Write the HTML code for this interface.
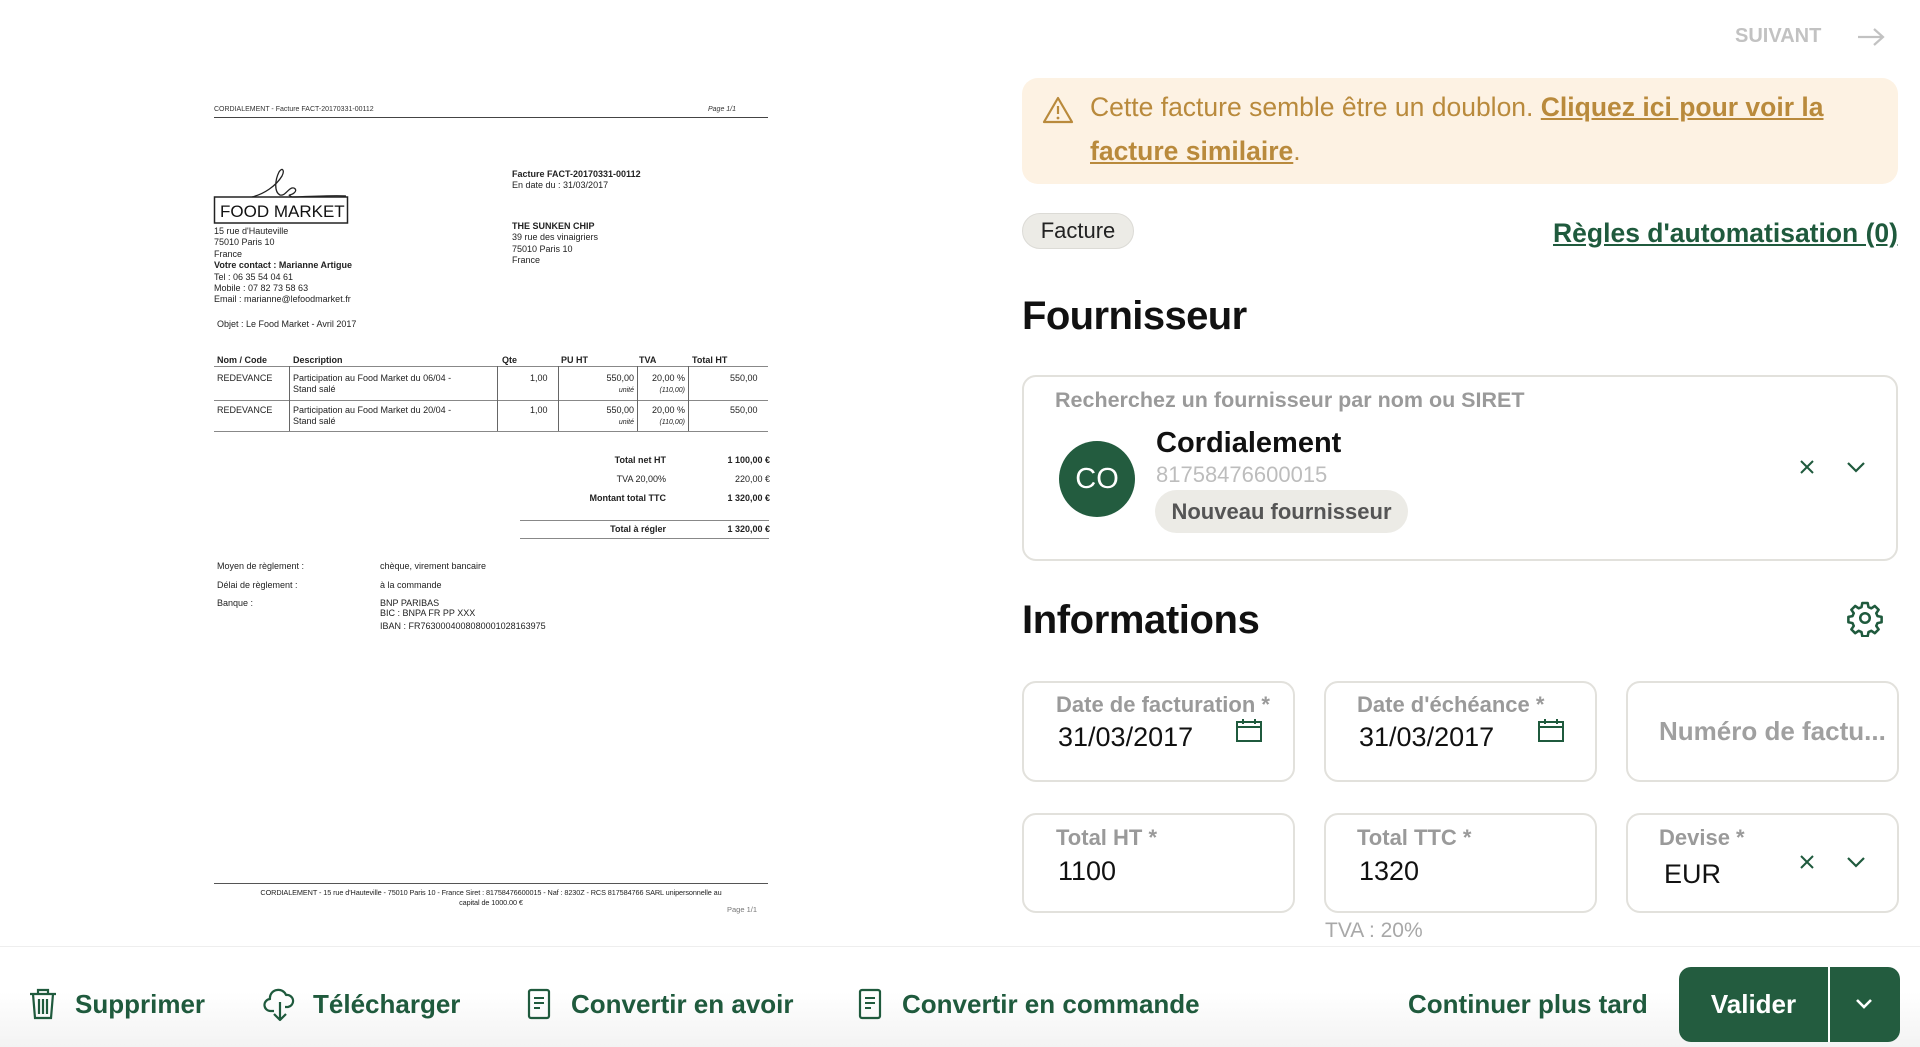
<!DOCTYPE html>
<html><head><meta charset="utf-8"><style>
*{margin:0;padding:0;box-sizing:border-box}
body{width:1920px;height:1047px;position:relative;background:#fff;font-family:"Liberation Sans",sans-serif;overflow:hidden}
.a{position:absolute;white-space:nowrap}
.d{font-size:9px;color:#222;line-height:11.4px}
.b{font-weight:bold}
.g{color:#1f5a3d}
.box{position:absolute;border:2px solid #e2e1dc;border-radius:14px;background:#fff}
.lab{position:absolute;font-size:22px;font-weight:bold;color:#9a9a9a;white-space:nowrap}
.val{position:absolute;font-size:27px;color:#111;white-space:nowrap}
.bt{position:absolute;top:989px;font-size:26px;font-weight:bold;color:#1f5a3d;white-space:nowrap;line-height:30px}
</style></head><body>

<div class="a" style="left:214px;top:106px;font-size:7px;color:#333">CORDIALEMENT - Facture FACT-20170331-00112</div>
<div class="a" style="left:708px;top:106px;font-size:7px;color:#333;font-style:italic">Page 1/1</div>
<div class="a" style="left:214px;top:117px;width:554px;height:1px;background:#444"></div>

<svg class="a" style="left:212px;top:164px" width="140" height="62" viewBox="0 0 140 62">
<path d="M40 33 C52 30 64 22 70 12 C73 6 70 3 67 8 C63 16 62 28 68 31 C72 32 74 28 78 25 C82 22 86 26 82 29 C79 32 74 30 80 33 C88 33 120 31 134 32" fill="none" stroke="#222" stroke-width="1.3"/>
<rect x="2.5" y="33" width="133" height="26" fill="none" stroke="#222" stroke-width="1.5"/>
<text x="8" y="53" font-family="Liberation Sans" font-size="17" fill="#111">FOOD MARKET</text>
</svg>

<div class="a d" style="left:214px;top:226px">15 rue d'Hauteville<br>75010 Paris 10<br>France<br><b>Votre contact : Marianne Artigue</b><br>Tel : 06 35 54 04 61<br>Mobile : 07 82 73 58 63<br>Email : marianne@lefoodmarket.fr</div>
<div class="a d" style="left:217px;top:319px">Objet : Le Food Market - Avril 2017</div>
<div class="a d" style="left:512px;top:169px"><b>Facture FACT-20170331-00112</b><br>En date du : 31/03/2017</div>
<div class="a d" style="left:512px;top:221px"><b>THE SUNKEN CHIP</b><br>39 rue des vinaigriers<br>75010 Paris 10<br>France</div>

<div class="a d b" style="left:217px;top:355px">Nom / Code</div>
<div class="a d b" style="left:293px;top:355px">Description</div>
<div class="a d b" style="left:502px;top:355px">Qte</div>
<div class="a d b" style="left:561px;top:355px">PU HT</div>
<div class="a d b" style="left:639px;top:355px">TVA</div>
<div class="a d b" style="left:692px;top:355px">Total HT</div>
<div class="a" style="left:214px;top:366px;width:554px;height:1px;background:#888"></div>
<div class="a" style="left:214px;top:400px;width:554px;height:1px;background:#888"></div>
<div class="a" style="left:214px;top:431px;width:554px;height:1px;background:#888"></div>
<div class="a" style="left:289px;top:366px;width:1px;height:65px;background:#666"></div>
<div class="a" style="left:497px;top:366px;width:1px;height:65px;background:#666"></div>
<div class="a" style="left:558px;top:366px;width:1px;height:65px;background:#666"></div>
<div class="a" style="left:637px;top:366px;width:1px;height:65px;background:#666"></div>
<div class="a" style="left:688px;top:366px;width:1px;height:65px;background:#666"></div>
<div class="a d" style="left:217px;top:373px">REDEVANCE</div>
<div class="a d" style="left:293px;top:373px">Participation au Food Market du 06/04 -<br>Stand salé</div>
<div class="a d" style="left:530px;top:373px">1,00</div>
<div class="a d" style="left:590px;top:373px;text-align:right;width:44px">550,00<br><i style="font-size:7px">unité</i></div>
<div class="a d" style="left:645px;top:373px;text-align:right;width:40px">20,00 %<br><i style="font-size:7px">(110,00)</i></div>
<div class="a d" style="left:730px;top:373px">550,00</div>
<div class="a d" style="left:217px;top:405px">REDEVANCE</div>
<div class="a d" style="left:293px;top:405px">Participation au Food Market du 20/04 -<br>Stand salé</div>
<div class="a d" style="left:530px;top:405px">1,00</div>
<div class="a d" style="left:590px;top:405px;text-align:right;width:44px">550,00<br><i style="font-size:7px">unité</i></div>
<div class="a d" style="left:645px;top:405px;text-align:right;width:40px">20,00 %<br><i style="font-size:7px">(110,00)</i></div>
<div class="a d" style="left:730px;top:405px">550,00</div>

<div class="a d" style="left:540px;top:451px;width:126px;text-align:right;line-height:19px"><b>Total net HT</b><br>TVA 20,00%<br><b>Montant total TTC</b></div>
<div class="a d" style="left:690px;top:451px;width:80px;text-align:right;line-height:19px"><b>1 100,00 €</b><br>220,00 €<br><b>1 320,00 €</b></div>
<div class="a" style="left:520px;top:520px;width:249px;height:1px;background:#888"></div>
<div class="a d b" style="left:540px;top:524px;width:126px;text-align:right">Total à régler</div>
<div class="a d b" style="left:690px;top:524px;width:80px;text-align:right">1 320,00 €</div>
<div class="a" style="left:520px;top:538px;width:249px;height:1px;background:#888"></div>

<div class="a d" style="left:217px;top:557px;line-height:18.5px">Moyen de règlement :<br>Délai de règlement :<br>Banque :</div>
<div class="a d" style="left:380px;top:557px;line-height:18.5px">chèque, virement bancaire<br>à la commande<br>BNP PARIBAS</div>
<div class="a d" style="left:380px;top:607px;line-height:12.5px">BIC : BNPA FR PP XXX<br>IBAN : FR7630004008080001028163975</div>

<div class="a" style="left:214px;top:883px;width:554px;height:1px;background:#555"></div>
<div class="a" style="left:218px;top:888px;width:546px;text-align:center;font-size:7.3px;line-height:10px;color:#222;white-space:normal;letter-spacing:-0.1px">CORDIALEMENT - 15 rue d'Hauteville - 75010 Paris 10 - France Siret : 81758476600015 - Naf : 8230Z - RCS 817584766 SARL unipersonnelle au<br>capital de 1000.00 €</div>
<div class="a" style="left:727px;top:905px;font-size:7.5px;color:#777">Page 1/1</div>

<div class="a" style="left:1735px;top:25px;font-size:20px;font-weight:bold;color:#c2c2c2">SUIVANT</div>
<svg class="a" style="left:1856px;top:26px" width="30" height="22" viewBox="0 0 30 22"><path d="M2 11H27M18 3l9 8-9 8" fill="none" stroke="#c2c2c2" stroke-width="2.2"/></svg>

<div class="a" style="left:1022px;top:78px;width:876px;height:106px;background:#fdf2e3;border-radius:16px"></div>
<svg class="a" style="left:1042px;top:96px" width="32" height="28" viewBox="0 0 32 28"><path d="M16 2L30 26H2Z" fill="none" stroke="#b98a3c" stroke-width="2.2" stroke-linejoin="round"/><path d="M16 10v8" stroke="#b98a3c" stroke-width="2.2"/><circle cx="16" cy="22" r="1.4" fill="#b98a3c"/></svg>
<div class="a" style="left:1090px;top:85px;font-size:26.5px;line-height:44px;color:#b98a3c;white-space:normal;width:790px">Cette facture semble être un doublon. <u style="font-weight:bold">Cliquez ici pour voir la facture similaire</u>.</div>

<div class="a" style="left:1022px;top:213px;width:112px;height:36px;background:#ecebe6;border:1.5px solid #dcdbd6;border-radius:18px;font-size:22px;line-height:33px;text-align:center;color:#222">Facture</div>
<div class="a g" style="right:22px;top:218px;font-size:26.5px;font-weight:bold;text-decoration:underline">Règles d'automatisation (0)</div>

<div class="a" style="left:1022px;top:294px;font-size:40px;font-weight:bold;color:#111;letter-spacing:-0.6px">Fournisseur</div>

<div class="box" style="left:1022px;top:375px;width:876px;height:186px"></div>
<div class="a" style="left:1055px;top:388px;font-size:21.5px;font-weight:bold;color:#9a9a9a">Recherchez un fournisseur par nom ou SIRET</div>
<div class="a" style="left:1059px;top:441px;width:76px;height:76px;border-radius:50%;background:#235c3f;color:#fff;font-size:29px;line-height:76px;text-align:center">CO</div>
<div class="a" style="left:1156px;top:427px;font-size:29px;font-weight:bold;color:#111">Cordialement</div>
<div class="a" style="left:1156px;top:462px;font-size:22px;color:#bdbdbd">81758476600015</div>
<div class="a" style="left:1155px;top:490px;width:253px;height:43px;border-radius:22px;background:#ecebe6;font-size:22px;font-weight:bold;line-height:43px;text-align:center;color:#555">Nouveau fournisseur</div>
<svg class="a" style="left:1799px;top:459px" width="16" height="16" viewBox="0 0 16 16"><path d="M2 2L14 14M14 2L2 14" stroke="#1f5a3d" stroke-width="2"/></svg>
<svg class="a" style="left:1846px;top:460px" width="20" height="14" viewBox="0 0 20 14"><path d="M2 3L10 11 18 3" fill="none" stroke="#1f5a3d" stroke-width="2.2"/></svg>

<div class="a" style="left:1022px;top:598px;font-size:40px;font-weight:bold;color:#111;letter-spacing:-0.4px">Informations</div>
<svg class="a" style="left:1846px;top:599px" width="38" height="38" viewBox="0 0 24 24"><circle cx="12" cy="12" r="3" fill="none" stroke="#1f5a3d" stroke-width="1.6"/><path d="M10.3 2.5h3.4l.5 2.6 1.8.8 2.2-1.5 2.4 2.4-1.5 2.2.8 1.8 2.6.5v3.4l-2.6.5-.8 1.8 1.5 2.2-2.4 2.4-2.2-1.5-1.8.8-.5 2.6h-3.4l-.5-2.6-1.8-.8-2.2 1.5-2.4-2.4 1.5-2.2-.8-1.8-2.6-.5v-3.4l2.6-.5.8-1.8-1.5-2.2 2.4-2.4 2.2 1.5 1.8-.8z" fill="none" stroke="#1f5a3d" stroke-width="1.6" stroke-linejoin="round"/></svg>

<div class="box" style="left:1022px;top:681px;width:273px;height:101px"></div>
<div class="lab" style="left:1056px;top:692px">Date de facturation *</div>
<div class="val" style="left:1058px;top:722px">31/03/2017</div>
<svg class="a" style="left:1235px;top:717px" width="28" height="26" viewBox="0 0 28 26"><rect x="2" y="5" width="24" height="19" fill="none" stroke="#1f5a3d" stroke-width="2"/><path d="M2 10h24M8 2v5M20 2v5M12 5h4" stroke="#1f5a3d" stroke-width="2"/></svg>

<div class="box" style="left:1324px;top:681px;width:273px;height:101px"></div>
<div class="lab" style="left:1357px;top:692px">Date d'échéance *</div>
<div class="val" style="left:1359px;top:722px">31/03/2017</div>
<svg class="a" style="left:1537px;top:717px" width="28" height="26" viewBox="0 0 28 26"><rect x="2" y="5" width="24" height="19" fill="none" stroke="#1f5a3d" stroke-width="2"/><path d="M2 10h24M8 2v5M20 2v5M12 5h4" stroke="#1f5a3d" stroke-width="2"/></svg>

<div class="box" style="left:1626px;top:681px;width:273px;height:101px"></div>
<div class="lab" style="left:1659px;top:716px;font-size:26px;color:#a0a0a0">Numéro de factu...</div>

<div class="box" style="left:1022px;top:813px;width:273px;height:100px"></div>
<div class="lab" style="left:1056px;top:825px">Total HT *</div>
<div class="val" style="left:1058px;top:856px">1100</div>

<div class="box" style="left:1324px;top:813px;width:273px;height:100px"></div>
<div class="lab" style="left:1357px;top:825px">Total TTC *</div>
<div class="val" style="left:1359px;top:856px">1320</div>

<div class="box" style="left:1626px;top:813px;width:273px;height:100px"></div>
<div class="lab" style="left:1659px;top:825px">Devise *</div>
<div class="val" style="left:1664px;top:859px">EUR</div>
<svg class="a" style="left:1799px;top:854px" width="16" height="16" viewBox="0 0 16 16"><path d="M2 2L14 14M14 2L2 14" stroke="#1f5a3d" stroke-width="2"/></svg>
<svg class="a" style="left:1846px;top:855px" width="20" height="14" viewBox="0 0 20 14"><path d="M2 3L10 11 18 3" fill="none" stroke="#1f5a3d" stroke-width="2.2"/></svg>

<div class="a" style="left:1325px;top:919px;font-size:21px;color:#a8a8a8">TVA : 20%</div>

<div class="a" style="left:0;top:946px;width:1920px;height:101px;background:linear-gradient(#fff 0%,#fff 45%,#f3f3f3 100%);border-top:1px solid #eeeeee"></div>

<svg class="a" style="left:28px;top:988px" width="30" height="32" viewBox="0 0 30 32"><path d="M2 6h26M10 6V2h10v4M5 6l2 24h16l2-24M11 11v15M15 11v15M19 11v15" fill="none" stroke="#1f5a3d" stroke-width="2.2"/></svg>
<div class="bt" style="left:75px">Supprimer</div>
<svg class="a" style="left:263px;top:987px" width="34" height="36" viewBox="0 0 34 36"><path d="M11 24H8a6 6 0 0 1-1-12 8 8 0 0 1 7-9 8 8 0 0 1 9 5 6 6 0 0 1 2 12h-3M17 15v18M11 27l6 6 6-6" fill="none" stroke="#1f5a3d" stroke-width="2.2" stroke-linejoin="round"/></svg>
<div class="bt" style="left:313px">Télécharger</div>
<svg class="a" style="left:527px;top:988px" width="24" height="32" viewBox="0 0 24 32"><rect x="2" y="2" width="20" height="28" rx="2" fill="none" stroke="#1f5a3d" stroke-width="2.2"/><path d="M7 10h10M7 15h10M7 20h6" stroke="#1f5a3d" stroke-width="2"/></svg>
<div class="bt" style="left:571px">Convertir en avoir</div>
<svg class="a" style="left:858px;top:988px" width="24" height="32" viewBox="0 0 24 32"><rect x="2" y="2" width="20" height="28" rx="2" fill="none" stroke="#1f5a3d" stroke-width="2.2"/><path d="M7 10h10M7 15h10M7 20h6" stroke="#1f5a3d" stroke-width="2"/></svg>
<div class="bt" style="left:902px">Convertir en commande</div>

<div class="bt" style="left:1408px">Continuer plus tard</div>
<div class="a" style="left:1679px;top:967px;width:221px;height:75px;background:#235c3f;border-radius:12px"></div>
<div class="a" style="left:1828px;top:967px;width:2px;height:75px;background:#fff"></div>
<div class="bt" style="left:1679px;width:149px;text-align:center;color:#fff">Valider</div>
<svg class="a" style="left:1854px;top:997px" width="20" height="14" viewBox="0 0 20 14"><path d="M3 3L10 10 17 3" fill="none" stroke="#fff" stroke-width="2.6"/></svg>
</body></html>
